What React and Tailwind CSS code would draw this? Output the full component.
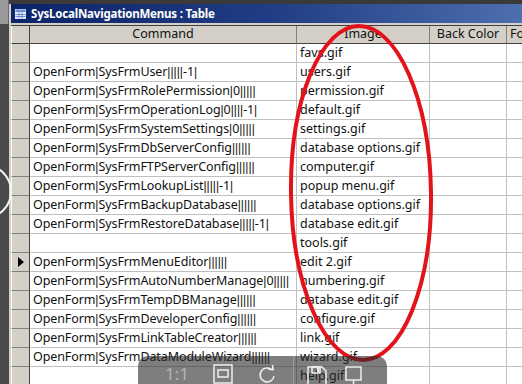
import React from "react";

const rows = [
  ["", "favs.gif"],
  ["OpenForm|SysFrmUser|||||-1|", "users.gif"],
  ["OpenForm|SysFrmRolePermission|0|||||", "permission.gif"],
  ["OpenForm|SysFrmOperationLog|0||||-1|", "default.gif"],
  ["OpenForm|SysFrmSystemSettings|0|||||", "settings.gif"],
  ["OpenForm|SysFrmDbServerConfig||||||", "database options.gif"],
  ["OpenForm|SysFrmFTPServerConfig||||||", "computer.gif"],
  ["OpenForm|SysFrmLookupList|||||-1|", "popup menu.gif"],
  ["OpenForm|SysFrmBackupDatabase||||||", "database options.gif"],
  ["OpenForm|SysFrmRestoreDatabase|||||-1|", "database edit.gif"],
  ["", "tools.gif"],
  ["OpenForm|SysFrmMenuEditor||||||", "edit 2.gif"],
  ["OpenForm|SysFrmAutoNumberManage|0|||||", "numbering.gif"],
  ["OpenForm|SysFrmTempDBManage||||||", "database edit.gif"],
  ["OpenForm|SysFrmDeveloperConfig||||||", "configure.gif"],
  ["OpenForm|SysFrmLinkTableCreator||||||", "link.gif"],
  ["OpenForm|SysFrmDataModuleWizard||||||", "wizard.gif"],
  ["", "help.gif"],
];

function Cmd({ text }) {
  const parts = text.split(/(\|+)/);
  return (
    <>
      {parts.map((p, i) =>
        p.startsWith("|") ? (
          <span key={i} className="text-[12px]" style={{ fontFamily: '"Liberation Sans", sans-serif' }}>
            {p}
          </span>
        ) : (
          <span key={i} className="tracking-[-0.1px]">{p}</span>
        )
      )}
    </>
  );
}

function Row({ cmd, img, current }) {
  return (
    <div className="flex h-[19px] shrink-0">
      <div className="w-[19px] shrink-0 bg-[#d4d0c8] border-l border-l-white border-b border-b-[#808080] border-r border-r-[#404040] flex items-center justify-center">
        {current && (
          <svg width="6" height="10" viewBox="0 0 6 10">
            <path d="M0 0 L6 5 L0 10 Z" fill="#000" />
          </svg>
        )}
      </div>
      <div className="w-[267px] shrink-0 bg-white border-r border-b border-[#c0c0c0] pl-[3px] flex items-center overflow-hidden whitespace-nowrap">
        <Cmd text={cmd} />
      </div>
      <div className="w-[133px] shrink-0 bg-white border-r border-b border-[#c0c0c0] pl-[3px] flex items-center whitespace-nowrap">
        {img}
      </div>
      <div className="w-[77px] shrink-0 bg-white border-r border-b border-[#c0c0c0]" />
      <div className="flex-1 bg-white border-b border-[#c0c0c0]" />
    </div>
  );
}

export default function App() {
  return (
    <div
      className="relative w-[522px] h-[384px] overflow-hidden bg-[#3e3e3e] flex text-[12.5px] text-[#111]"
      style={{ fontFamily: '"Noto Sans", "Liberation Sans", sans-serif' }}
    >
      <div className="w-[9px] shrink-0 flex flex-col">
        <div className="h-[24px] shrink-0 bg-[#9a9a9a] border-r border-[#6a6a6a]" />
        <div className="flex-1 bg-[#4a4a4a]" />
      </div>
      <div className="flex-1 flex flex-col border-l-2 border-[#d4d0c8] bg-[#d4d0c8] min-w-0">
        <div className="h-[4px] shrink-0 bg-[#3a3a3a] -ml-[2px]" />
        <div className="h-[19px] shrink-0 flex items-center gap-[5px] pl-[4px] bg-gradient-to-r from-[#0c2468] via-[#203c84] to-[#4d6eaf]">
          <svg width="11" height="10" viewBox="0 0 11 10">
            <rect x="0.5" y="0.5" width="10" height="9" fill="#e8eef8" stroke="#dfe6f5" />
            <rect x="0.5" y="0.5" width="10" height="2.5" fill="#6d8fcf" />
            <path d="M0.5 5.5 H10.5 M0.5 7.5 H10.5 M4 3 V9.5 M7 3 V9.5" stroke="#6d8fcf" strokeWidth="1" />
          </svg>
          <span className="text-white font-bold text-[11.5px] tracking-[-0.2px]">
            SysLocalNavigationMenus : Table
          </span>
        </div>
        <div className="h-[2px] shrink-0 bg-[#d4d0c8]" />
        <div className="flex h-[19px] shrink-0 border-t border-[#404040] bg-[#d4d0c8]">
          <div className="w-[19px] shrink-0 border-l border-l-white border-r border-r-[#404040] border-b border-b-[#404040]" />
          <div className="w-[267px] shrink-0 border-r border-r-[#808080] border-b border-b-[#404040] flex items-center justify-center">
            Command
          </div>
          <div className="w-[133px] shrink-0 border-r border-r-[#808080] border-b border-b-[#404040] flex items-center justify-center">
            Image
          </div>
          <div className="w-[77px] shrink-0 border-r border-r-[#808080] border-b border-b-[#404040] flex items-center justify-center whitespace-nowrap">
            Back Color
          </div>
          <div className="flex-1 border-b border-b-[#404040] pl-[3px] flex items-center overflow-hidden">
            Fo
          </div>
        </div>
        {rows.map((r, i) => (
          <Row key={i} cmd={r[0]} img={r[1]} current={i === 11} />
        ))}
      </div>

      <svg className="absolute left-0 top-0 pointer-events-none" width="522" height="384" viewBox="0 0 522 384">
        <ellipse cx="361" cy="193" rx="70" ry="167" fill="none" stroke="#e3131b" strokeWidth="4" transform="rotate(-0.8 361 193)" />
        <circle cx="-15.5" cy="191.5" r="26.5" fill="none" stroke="#f4f4f4" strokeWidth="2" />
      </svg>

      <div className="absolute left-[138px] top-[356px] w-[249px] h-[40px] rounded-[10px] bg-[rgba(40,40,40,0.6)] flex items-start pt-[8px] text-white">
        <span className="ml-[27px] w-[24px] text-[17px] leading-[20px] text-[#b4b4b4]">1:1</span>
        <svg className="ml-[24px]" width="20" height="20" viewBox="0 0 20 20">
          <rect x="1" y="1" width="18" height="18" fill="none" stroke="#eee" strokeWidth="1.5" />
          <rect x="5" y="6" width="10" height="7" fill="none" stroke="#eee" strokeWidth="1.5" />
        </svg>
        <svg className="ml-[24px] mt-[1px]" width="20" height="20" viewBox="0 0 20 20">
          <path d="M15 5 A7 7 0 1 0 17 11" fill="none" stroke="#eee" strokeWidth="1.6" />
          <path d="M11 4 L16 4.5 L15.5 0" fill="none" stroke="#eee" strokeWidth="1.6" />
        </svg>
        <div className="ml-[16px] -mt-[8px] w-px h-[30px] bg-[#9a9a9a]" />
        <svg className="ml-[13px] mt-[2px]" width="20" height="20" viewBox="0 0 20 20">
          <path d="M1 1 H15 L19 5 V19 H1 Z" fill="none" stroke="#eee" strokeWidth="1.5" />
          <rect x="5" y="1" width="8" height="6" fill="none" stroke="#eee" strokeWidth="1.5" />
          <rect x="10" y="2" width="2" height="4" fill="#eee" />
        </svg>
        <svg className="ml-[18px] mt-[2px]" width="18" height="20" viewBox="0 0 18 20">
          <rect x="1" y="1" width="15" height="13" fill="none" stroke="#eee" strokeWidth="1.5" />
          <path d="M8.5 14 V20" stroke="#eee" strokeWidth="1.5" />
        </svg>
      </div>
    </div>
  );
}
